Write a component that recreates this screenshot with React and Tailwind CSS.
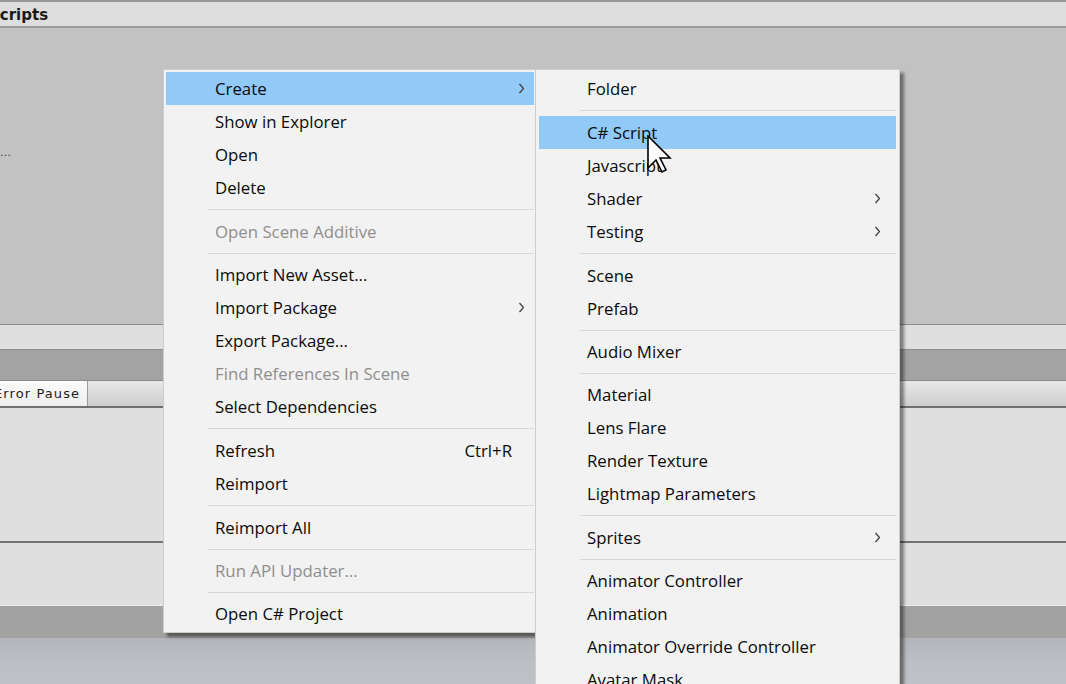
const mainItems = [
  { label: "Create", sub: true, active: true },
  { label: "Show in Explorer" },
  { label: "Open" },
  { label: "Delete" },
  { sep: 11 },
  { label: "Open Scene Additive", disabled: true },
  { sep: 10 },
  { label: "Import New Asset..." },
  { label: "Import Package", sub: true },
  { label: "Export Package..." },
  { label: "Find References In Scene", disabled: true },
  { label: "Select Dependencies" },
  { sep: 11 },
  { label: "Refresh", shortcut: "Ctrl+R" },
  { label: "Reimport" },
  { sep: 11 },
  { label: "Reimport All" },
  { sep: 10 },
  { label: "Run API Updater...", disabled: true },
  { sep: 10 },
  { label: "Open C# Project" },
];

const createItems = [
  { label: "Folder" },
  { sep: 11 },
  { label: "C# Script", active: true },
  { label: "Javascript" },
  { label: "Shader", sub: true },
  { label: "Testing", sub: true },
  { sep: 11 },
  { label: "Scene" },
  { label: "Prefab" },
  { sep: 10 },
  { label: "Audio Mixer" },
  { sep: 10 },
  { label: "Material" },
  { label: "Lens Flare" },
  { label: "Render Texture" },
  { label: "Lightmap Parameters" },
  { sep: 11 },
  { label: "Sprites", sub: true },
  { sep: 10 },
  { label: "Animator Controller" },
  { label: "Animation" },
  { label: "Animator Override Controller" },
  { label: "Avatar Mask" },
];

const Chevron = () => (
  <svg width="7" height="11" viewBox="0 0 7 11" className="block">
    <polyline points="1.5,1 5.5,5.5 1.5,10" fill="none" stroke="#3c3c3c" strokeWidth="1.2" />
  </svg>
);

const MenuList = ({ items, textLeft, sepLeft, chevronRight }) => (
  <div className="flex flex-col">
    {items.map((it, i) =>
      it.sep ? (
        <div key={i} className="flex items-center" style={{ height: it.sep }}>
          <div className="h-px w-full bg-[#d7d7d7]" style={{ marginLeft: sepLeft }} />
        </div>
      ) : (
        <div
          key={i}
          className={
            "relative flex h-[33px] items-center " +
            (it.active ? "bg-[#91c9f7] " : "") +
            (it.disabled ? "text-[#8e8e8e]" : "text-[#0a0a0a]")
          }
          style={{ paddingLeft: textLeft }}
        >
          <span className="whitespace-nowrap">{it.label}</span>
          {it.shortcut && (
            <span className="absolute right-[22px] whitespace-nowrap">{it.shortcut}</span>
          )}
          {it.sub && (
            <span className="absolute" style={{ right: chevronRight }}>
              <Chevron />
            </span>
          )}
        </div>
      )
    )}
  </div>
);

const Cursor = () => (
  <svg width="26" height="40" viewBox="0 0 26 40" className="absolute left-[647px] top-[135px]">
    <polygon
      points="1,1 1,33 9,25 15,37 19,35 13,23 23,23"
      fill="#fff"
      stroke="#000"
      strokeWidth="1.6"
      strokeLinejoin="miter"
    />
  </svg>
);

export default function App() {
  return (
    <div className="relative h-[684px] w-[1066px] overflow-hidden bg-[#c2c2c2] font-['Open_Sans',sans-serif]">
      <div className="flex flex-col">
        <div className="h-[2px] bg-[#979797]" />
        <div className="flex h-[24px] items-center overflow-hidden bg-[#dedede] pt-[3px]">
          <span className="ml-[-11px] font-['DejaVu_Sans',sans-serif] text-[15px] font-bold text-[#1a1a1a]">
            Scripts
          </span>
        </div>
        <div className="h-[2px] bg-[#9b9b9b]" />
        <div className="relative h-[296px] bg-[#c2c2c2]">
          <span className="absolute left-[0px] top-[117px] font-['DejaVu_Sans',sans-serif] text-[11px] text-[#333]">
            …
          </span>
        </div>
        <div className="h-px bg-[#8a8a8a]" />
        <div className="h-[24px] bg-[#dfdfdf]" />
        <div className="h-px bg-[#8c8c8c]" />
        <div className="h-[30px] bg-[#a3a3a3]" />
        <div className="h-px bg-[#8a8a8a]" />
        <div className="flex h-[25px] bg-gradient-to-b from-[#e8e8e8] to-[#cecece]">
          <div className="flex w-[88px] items-center overflow-hidden border-r border-[#9a9a9a] bg-gradient-to-b from-[#fbfbfb] to-[#eeeeee] pt-px">
            <span className="ml-[-6px] whitespace-nowrap font-['DejaVu_Sans',sans-serif] text-[13px] font-medium tracking-[1.1px] text-[#1c1c1c]">
              Error Pause
            </span>
          </div>
        </div>
        <div className="h-[2px] bg-[#6f6f6f]" />
        <div className="h-[133px] bg-[#dfdfdf]" />
        <div className="h-[2px] bg-[#727272]" />
        <div className="h-[62px] bg-[#dfdfdf]" />
        <div className="h-px bg-[#ececec]" />
        <div className="h-[32px] bg-[#a2a2a2]" />
        <div className="h-[46px] bg-gradient-to-b from-[#b2b5b9] via-[#bcbfc3] to-[#bec1c5]" />
      </div>

      <div className="absolute left-[163px] top-[69px] w-[374px] border border-[#cccccc] bg-[#f2f2f2] px-[2px] py-[2px] text-[16.8px] shadow-[4px_4px_3px_rgba(0,0,0,0.45)]">
        <MenuList items={mainItems} textLeft={49} sepLeft={42} chevronRight={9} />
      </div>

      <div className="absolute left-[535px] top-[69px] w-[365px] border border-[#cccccc] bg-[#f2f2f2] px-[3px] py-[2px] text-[16.8px] shadow-[4px_4px_3px_rgba(0,0,0,0.45)]">
        <MenuList items={createItems} textLeft={48} sepLeft={41} chevronRight={15} />
      </div>

      <Cursor />
    </div>
  );
}
